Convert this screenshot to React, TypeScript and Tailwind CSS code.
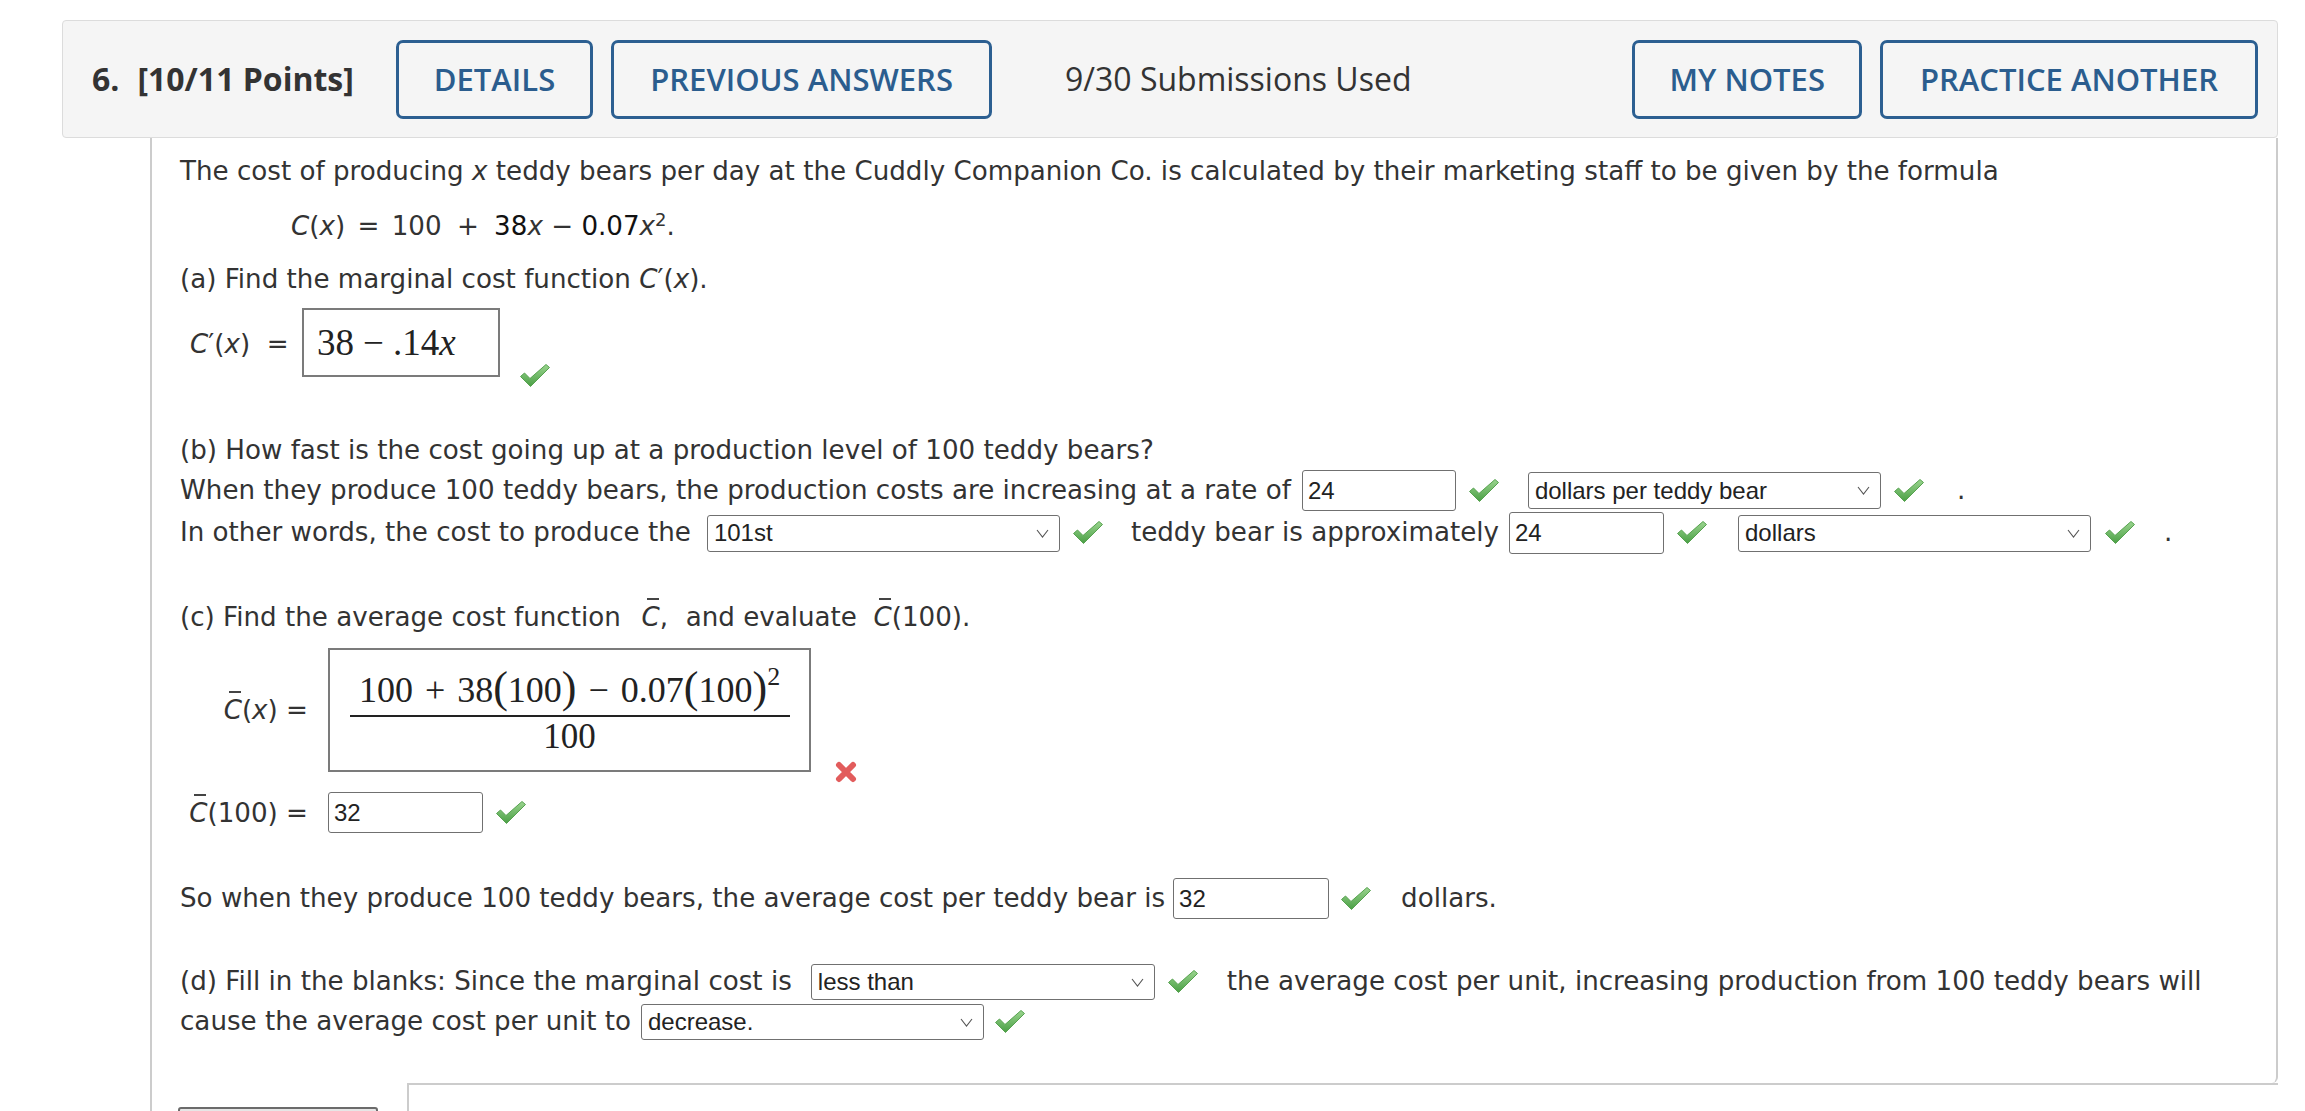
import React from 'react';

const Check = ({ className = '' }: { className?: string }) => (
  <svg width="32" height="26" viewBox="0 0 32 26" className={`shrink-0 ${className}`}>
    <defs>
      <linearGradient id="ck" x1="0" y1="0" x2="0" y2="1">
        <stop offset="0" stopColor="#9bd58f" />
        <stop offset="1" stopColor="#4a9f45" />
      </linearGradient>
    </defs>
    <path d="M1.5 13.5 L5.5 10 L11 15.5 L27 1.5 L30.5 4.5 L11.5 23.5 Z" fill="url(#ck)" stroke="#56a24f" strokeWidth="1" strokeLinejoin="round" />
  </svg>
);

const Cross = ({ className = '' }: { className?: string }) => (
  <svg width="24" height="24" viewBox="0 0 24 24" className={`shrink-0 ${className}`}>
    <path d="M5 5 L19 19 M19 5 L5 19" stroke="#e25c5c" strokeWidth="6" strokeLinecap="round" />
  </svg>
);

const Field = ({ value, className = '' }: { value: string; className?: string }) => (
  <div className={`flex items-center shrink-0 bg-white border border-[#707070] rounded-[3px] pl-[5px] font-['Liberation_Sans',Arial,sans-serif] text-[24px] text-[#222] ${className}`}>
    {value}
  </div>
);

const Select = ({ value, className = '' }: { value: string; className?: string }) => (
  <div className={`flex items-center justify-between shrink-0 bg-white border border-[#707070] rounded-[3px] pl-[6px] pr-[10px] font-['Liberation_Sans',Arial,sans-serif] text-[24px] text-[#222] ${className}`}>
    <span>{value}</span>
    <svg width="13" height="9" viewBox="0 0 13 9">
      <path d="M1 1 L6.5 8 L12 1" fill="none" stroke="#555" strokeWidth="1.1" />
    </svg>
  </div>
);

// C with a bar over it
const Cbar = ({ className = '' }: { className?: string }) => (
  <span className={`relative inline-block italic ${className}`}>
    C<span className="absolute right-[1px] top-[1px] w-[12px] h-[2px] bg-[#444]" />
  </span>
);

const HeaderButton = ({ label, className = '' }: { label: string; className?: string }) => (
  <button className={`h-[79px] border-[3px] border-[#2c5f91] rounded-[7px] bg-transparent text-[31px] font-semibold text-[#2b5d8e] ${className}`}>
    {label}
  </button>
);

export default function App() {
  return (
    <div className="h-[1111px] overflow-hidden bg-white pt-[20px] pl-[62px] pr-[27px]">
      {/* question header */}
      <header className="h-[118px] flex items-center rounded-[4px] border border-[#dcdcdc] bg-[#f5f5f5] pl-[29px] pr-[19px] font-['Open_Sans',sans-serif] whitespace-nowrap">
        <span className="text-[32px] font-bold text-[#333]">6.</span>
        <span className="ml-[18px] text-[32px] font-bold text-[#333]">[10/11 Points]</span>
        <HeaderButton label="DETAILS" className="ml-[42px] px-[35px]" />
        <HeaderButton label="PREVIOUS ANSWERS" className="ml-[18px] px-[36px]" />
        <span className="ml-[73px] text-[32px] text-[#333]">9/30 Submissions Used</span>
        <HeaderButton label="MY NOTES" className="ml-auto px-[34px]" />
        <HeaderButton label="PRACTICE ANOTHER" className="ml-[18px] px-[37px]" />
      </header>

      <div className="ml-[88px] border-l-2 border-[#cccccc]">
        <div className="border-r-2 border-[#cccccc] rounded-br-[6px] pl-[28px] pt-[13px] pb-[43px] text-[26.15px] text-[#333] font-['DejaVu_Sans',Verdana,sans-serif] whitespace-nowrap">
          <p className="leading-[40px]">
            The cost of producing <i>x</i> teddy bears per day at the Cuddly Companion Co. is calculated by their marketing staff to be given by the formula
          </p>
          <p className="mt-[15px] pl-[111px] leading-[40px]">
            <i>C</i>(<i>x</i>) <span className="mx-[4px]">=</span> 100 <span className="mx-[7px]">+</span> <span className="text-[#111]">38</span><i>x</i> − <span className="text-[#111]">0.07</span><i>x</i>
            <sup className="text-[18px]">2</sup>.
          </p>
          <p className="mt-[13px] leading-[40px]">
            (a) Find the marginal cost function <i>C</i>′(<i>x</i>).
          </p>

          <div className="mt-[9px] flex items-start h-[69px]">
            <span className="w-[122px] pl-[10px] mt-[16px] leading-[40px]">
              <i>C</i>′(<i>x</i>) &nbsp;=
            </span>
            <div className="w-[198px] h-[69px] flex items-center pl-[13px] border-2 border-[#7b7b7b] font-['Liberation_Serif',serif] text-[37px] text-[#222]">
              38<span className="mx-[9px]">−</span>.14<i>x</i>
            </div>
            <Check className="ml-[19px] mt-[55px]" />
          </div>

          <p className="mt-[53px] leading-[40px]">
            (b) How fast is the cost going up at a production level of 100 teddy bears?
          </p>
          <div className="flex items-center h-[41px]">
            <span>When they produce 100 teddy bears, the production costs are increasing at a rate of</span>
            <Field value="24" className="ml-[11px] w-[154px] h-[41px]" />
            <Check className="ml-[12px]" />
            <Select value="dollars per teddy bear" className="ml-[28px] w-[353px] h-[37px]" />
            <Check className="ml-[12px]" />
            <span className="ml-[32px]">.</span>
          </div>
          <div className="mt-[2px] flex items-center h-[40px]">
            <span>In other words, the cost to produce the</span>
            <Select value="101st" className="ml-[16px] w-[353px] h-[37px]" />
            <Check className="ml-[12px]" />
            <span className="ml-[27px]">teddy bear is approximately</span>
            <Field value="24" className="ml-[10px] w-[155px] h-[42px]" />
            <Check className="ml-[12px]" />
            <Select value="dollars" className="ml-[30px] w-[353px] h-[37px]" />
            <Check className="ml-[13px]" />
            <span className="ml-[28px]">.</span>
          </div>

          <p className="mt-[44px] leading-[40px]">
            (c) Find the average cost function &nbsp;<Cbar className="ml-[4px]" />, &nbsp;<span className="ml-[1px]">and evaluate</span> &nbsp;<Cbar />(100).
          </p>
          <div className="mt-[11px] flex items-start h-[124px]">
            <span className="w-[148px] pr-[20px] mt-[42px] text-right leading-[40px]">
              <Cbar />(<i>x</i>) =
            </span>
            <div className="w-[483px] h-[124px] flex flex-col items-center justify-center border-2 border-[#7b7b7b] font-['Liberation_Serif',serif] text-[#222]">
              <div className="leading-[50px] text-[36px]">
                100<span className="mx-[12px]">+</span>38<span className="text-[44px]">(</span>100<span className="text-[44px]">)</span>
                <span className="mx-[12px]">−</span>0.07<span className="text-[44px]">(</span>100<span className="text-[44px]">)</span>
                <sup className="text-[26px] relative top-[-17px]">2</sup>
              </div>
              <div className="w-[440px] h-[2px] bg-[#222]" />
              <div className="leading-[40px] text-[35px]">100</div>
            </div>
            <Cross className="ml-[23px] mt-[112px]" />
          </div>
          <div className="mt-[20px] flex items-center h-[41px]">
            <span className="w-[148px] pr-[20px] text-right leading-[40px]">
              <Cbar />(100) =
            </span>
            <Field value="32" className="w-[155px] h-[41px]" />
            <Check className="ml-[12px]" />
          </div>

          <div className="mt-[45px] flex items-center h-[41px]">
            <span>So when they produce 100 teddy bears, the average cost per teddy bear is</span>
            <Field value="32" className="ml-[8px] w-[156px] h-[41px]" />
            <Check className="ml-[11px]" />
            <span className="ml-[29px]">dollars.</span>
          </div>

          <div className="mt-[45px] flex items-center h-[36px]">
            <span>(d) Fill in the blanks: Since the marginal cost is</span>
            <Select value="less than" className="ml-[19px] w-[344px] h-[36px]" />
            <Check className="ml-[12px]" />
            <span className="ml-[28px]">the average cost per unit, increasing production from 100 teddy bears will</span>
          </div>
          <div className="mt-[4px] flex items-center h-[36px]">
            <span>cause the average cost per unit to</span>
            <Select value="decrease." className="ml-[10px] w-[343px] h-[36px]" />
            <Check className="ml-[10px]" />
          </div>
        </div>

        <div className="flex h-[80px]">
          <div className="w-[255px] shrink-0 pl-[26px] pt-[24px]">
            <div className="w-[200px] h-[44px] border-2 border-[#6b6b6b] rounded-[3px] bg-[#e6e6e6]" />
          </div>
          <div className="flex-1 border-t-2 border-l-2 border-[#cccccc]" />
        </div>
      </div>
    </div>
  );
}
